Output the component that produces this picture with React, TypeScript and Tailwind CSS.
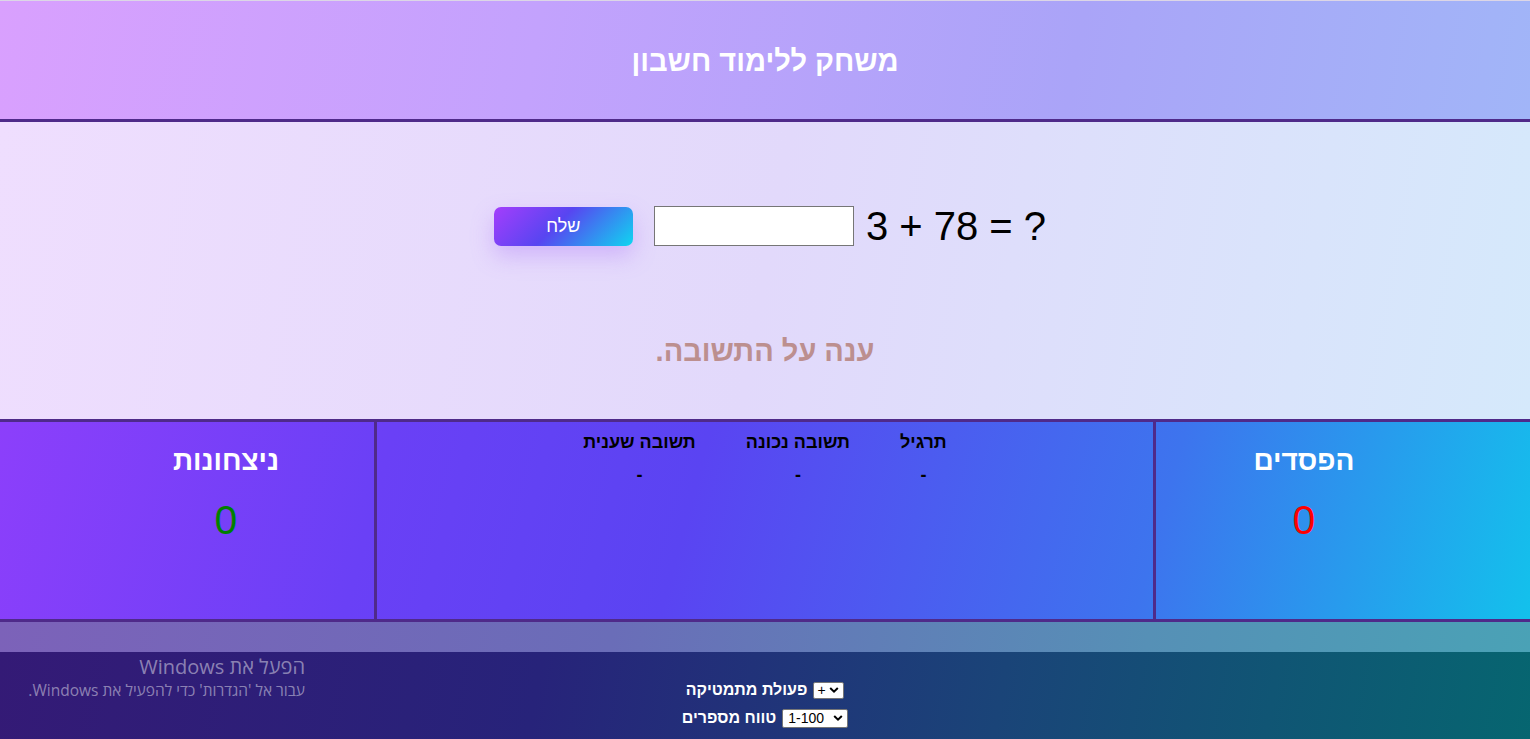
import React from "react";

const font = { fontFamily: '"Liberation Sans", Arial, sans-serif' };

function Chevron() {
  return (
    <svg width="10" height="7" viewBox="0 0 10 7" className="pointer-events-none absolute right-[5px] top-1/2 -translate-y-1/2">
      <path d="M1.2 1.5 L5 5.2 L8.8 1.5" fill="none" stroke="#000" strokeWidth="2" />
    </svg>
  );
}

export default function App() {
  return (
    <div dir="rtl" className="relative w-[1530px] h-[739px] overflow-hidden" style={font}>
      <div className="h-px bg-[#dcd6e6]" />
      {/* Header */}
      <header className="h-[121px] pt-[2px] flex items-center justify-center bg-[linear-gradient(100deg,#d9a0fe_0%,#c3a2fd_35%,#aaa4f8_70%,#a1b5f8_100%)] border-b-[3px] border-[#4f2a8a]">
        <h1 className="text-white font-bold text-[29px] leading-none">משחק ללימוד חשבון</h1>
      </header>

      {/* Main */}
      <main className="h-[300px] border-b-[3px] border-[#4f2a8a] bg-[linear-gradient(100deg,#efdefe_0%,#e2d9fb_50%,#d5e9fb_100%)] flex flex-col items-center pt-[84px]">
        <div className="flex items-center pl-[10px]">
          <span dir="ltr" className="text-[40px] leading-[40px] text-black">3 + 78 = ?</span>
          <input
            type="text"
            className="mr-[12px] w-[200px] h-[40px] bg-white border border-[#767676] outline-none"
          />
          <button className="mr-[21px] w-[139px] h-[39px] rounded-[7px] text-white text-[18px] font-normal bg-[linear-gradient(135deg,#a43efc_0%,#5845f1_45%,#0fd6f0_100%)] shadow-[0_10px_22px_rgba(165,110,250,0.35)]">
            שלח
          </button>
        </div>
        <p className="mt-[89px] text-[29px] leading-[32px] font-bold text-[#bc8f8f]">ענה על התשובה.</p>
      </main>

      {/* Stats */}
      <section className="h-[200px] border-b-[3px] border-[#4f2a8a] flex bg-[linear-gradient(105deg,#8c3ffb_0%,#6a40f6_25%,#5a44f2_45%,#3d74ee_75%,#13c1ec_100%)]">
        <div className="w-[374px] pr-[78px] flex flex-col items-center pt-[23px]">
          <h2 className="text-white font-bold text-[28px] leading-[32px]">הפסדים</h2>
          <div className="mt-[20px] text-[41px] leading-[46px] text-[#ff0000]">0</div>
        </div>
        <div className="flex-1 border-x-[3px] border-[#4f2a8a] flex justify-center pt-[8px]">
          <table className="h-fit border-collapse">
            <thead>
              <tr>
                <th className="px-[25px] text-[18px] leading-[24px] font-bold text-black">תרגיל</th>
                <th className="px-[25px] text-[18px] leading-[24px] font-bold text-black">תשובה נכונה</th>
                <th className="px-[25px] text-[18px] leading-[24px] font-bold text-black">תשובה שענית</th>
              </tr>
            </thead>
            <tbody>
              <tr>
                <td className="pt-[9px] text-center text-[18px] leading-[24px] font-bold text-black">-</td>
                <td className="pt-[9px] text-center text-[18px] leading-[24px] font-bold text-black">-</td>
                <td className="pt-[9px] text-center text-[18px] leading-[24px] font-bold text-black">-</td>
              </tr>
            </tbody>
          </table>
        </div>
        <div className="w-[374px] pl-[78px] flex flex-col items-center pt-[23px]">
          <h2 className="text-white font-bold text-[28px] leading-[32px]">ניצחונות</h2>
          <div className="mt-[20px] text-[41px] leading-[46px] text-[#008000]">0</div>
        </div>
      </section>

      {/* Band */}
      <div className="h-[30px] bg-[linear-gradient(100deg,#7c62b9_0%,#6a6db8_40%,#5690b6_75%,#4aa2b6_100%)]" />

      {/* Footer */}
      <footer className="h-[120px] bg-[linear-gradient(100deg,#341a76_0%,#27237a_35%,#1a4478_65%,#066670_100%)] flex flex-col items-center pt-[28px] gap-[8px]">
        <div className="flex items-center gap-[6px] h-[20px]">
          <div dir="ltr" className="relative flex">
            <select className="appearance-none bg-white border border-[#767676] rounded-[2px] w-[31px] h-[17px] text-[14px] leading-[15px] pl-[3px] text-black outline-none" style={font}>
              <option>+</option>
            </select>
            <Chevron />
          </div>
          <label className="text-white font-bold text-[16px] leading-[20px]">פעולת מתמטיקה</label>
        </div>
        <div className="flex items-center gap-[6px] h-[20px]">
          <div dir="ltr" className="relative flex">
            <select className="appearance-none bg-white border border-[#767676] rounded-[2px] w-[66px] h-[19px] text-[14px] leading-[17px] pl-[5px] text-black outline-none" style={font}>
              <option>1-100</option>
            </select>
            <Chevron />
          </div>
          <label className="text-white font-bold text-[16px] leading-[20px]">טווח מספרים</label>
        </div>
      </footer>

      {/* Windows activation watermark */}
      <div
        className="absolute top-[655px] right-[1225px] text-right text-white/45 whitespace-nowrap"
        style={{ fontFamily: '"Open Sans", "Noto Sans", sans-serif' }}
      >
        <div className="text-[20px] leading-[24px]">הפעל את Windows</div>
        <div className="text-[15.5px] leading-[22px]">עבור אל 'הגדרות' כדי להפעיל את Windows.</div>
      </div>
    </div>
  );
}
